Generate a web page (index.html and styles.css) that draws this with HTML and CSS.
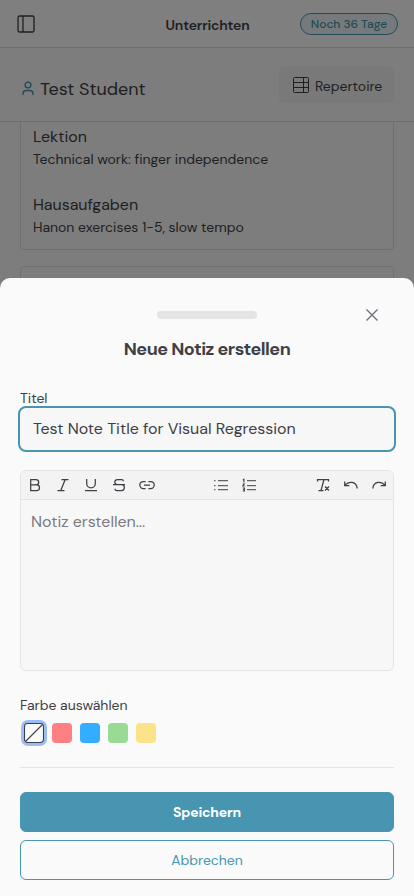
FILE: index.html
```html
<!DOCTYPE html>
<html lang="de">
<head>
<meta charset="utf-8">
<meta name="viewport" content="width=device-width, initial-scale=1">
<title>Unterrichten</title>
<link rel="stylesheet" href="styles.css">
</head>
<body>
<div class="app">
  <header class="topbar">
    <svg class="menu" width="18" height="18" viewBox="0 0 18 18"><rect x="1" y="1" width="16" height="16" rx="1.5"/><path d="M6 1v16"/></svg>
    <h1>Unterrichten</h1>
    <span class="badge">Noch 36 Tage</span>
  </header>
  <div class="student-bar">
    <svg class="user" width="12" height="15" viewBox="0 0 12 15"><circle cx="6" cy="4" r="2.9"/><path d="M1 14v-1.3C1 10.700 2.500 9.500 4.300 9.500h3.400C9.500 9.500 11 10.700 11 12.700V14"/></svg>
    <h2>Test Student</h2>
    <button class="repertoire">
      <svg width="16" height="16" viewBox="0 0 16 16"><rect x=".5" y=".5" width="15" height="15" rx="1"/><path d="M.5 5.500h15M.5 10.500h15M10.500.5v15"/></svg>
      <span>Repertoire</span>
    </button>
  </div>
  <main class="lessons">
    <article class="lesson lesson-cut">
      <section><h3>Lektion</h3><p>Technical work: finger independence</p></section>
      <section><h3>Hausaufgaben</h3><p>Hanon exercises 1-5, slow tempo</p></section>
    </article>
    <article class="lesson lesson-next"></article>
  </main>
</div>
<div class="backdrop">
  <div class="sheet">
    <div class="sheet-head">
      <span class="handle"></span>
      <svg class="close" width="14" height="14" viewBox="0 0 14 14"><path d="M1.500 1.500l11 11M12.500 1.500l-11 11"/></svg>
    </div>
    <h2 class="sheet-title">Neue Notiz erstellen</h2>
    <label class="label-title" for="t">Titel</label>
    <input id="t" class="field" value="Test Note Title for Visual Regression">
    <div class="editor">
      <div class="toolbar">
        <div class="group">
          <svg viewBox="0 0 16 16"><path d="M3.700 2.500h5.300a2.600 2.600 0 0 1 0 5.400H3.700zM3.700 7.900h6a2.700 2.700 0 0 1 0 5.600h-6z"/></svg>
          <svg viewBox="0 0 16 16"><path d="M6.500 2.500h7M2.500 13.500h7M10.200 2.500L5.800 13.500"/></svg>
          <svg viewBox="0 0 16 16"><path d="M3.700 2v4.500a4.300 4.300 0 0 0 8.600 0V2M2 13.500h12"/></svg>
          <svg viewBox="0 0 16 16"><path d="M12.400 4.200c0-1-.8-1.700-1.800-1.700H6.500c-3.600 0-3.600 5 0 5h4c3.800 0 3.800 6 0 6H6c-1.200 0-2-.6-2-1.800M2 7.500h12"/></svg>
          <svg viewBox="0 0 16 16"><path d="M6.600 4.500H4.300a3.500 3.500 0 0 0 0 7h2.300M9.400 4.500h2.300a3.500 3.500 0 0 1 0 7H9.400M5 8h6"/></svg>
        </div>
        <div class="group lists">
          <svg viewBox="0 0 16 16"><path d="M5 3.500h10M5 8.500h10M5 12.500h10M1 3.500h1.500M1 8.500h1.500M1 12.500h1.500"/></svg>
          <svg viewBox="0 0 16 16"><path d="M6 3.500h9M6 8.500h9M6 12.500h9"/><path class="thin" d="M1.900 3l1-.7v3.200M1.700 7h1.500L1.900 9h1.700M1.700 11h1.700v3H1.700M2.200 12.500h1.200"/></svg>
        </div>
        <div class="group">
          <svg viewBox="0 0 16 16"><path d="M2.500 4.500v-2h11v2M9 2.500L6 13.500M3.500 13.500h5M10 9.500l4 4M14 9.500l-4 4"/></svg>
          <svg viewBox="0 0 16 16"><path d="M1.700 4.500v4h4.600M2 8.200C6 3.500 13.500 4.500 14.200 11.500"/></svg>
          <svg viewBox="0 0 16 16"><path d="M14.300 4.500v4H9.700M14 8.200C10 3.500 2.500 4.500 1.800 11.500"/></svg>
        </div>
      </div>
      <div class="placeholder">Notiz erstellen...</div>
    </div>
    <div class="label-color">Farbe auswählen</div>
    <div class="swatches">
      <span class="swatch none"><svg width="20" height="20" viewBox="0 0 20 20"><rect x=".5" y=".5" width="19" height="19" rx="3"/><path d="M1.500 18.500l17-17"/></svg></span>
      <span class="swatch red"></span><span class="swatch blue"></span><span class="swatch green"></span><span class="swatch yellow"></span>
    </div>
    <div class="actions">
      <button class="btn primary">Speichern</button>
      <button class="btn secondary">Abbrechen</button>
    </div>
  </div>
</div>
</body>
</html>
```
FILE: styles.css
```css
* { box-sizing: border-box; margin: 0; padding: 0; }
body { width: 414px; height: 896px; overflow: hidden; background: #fafafa; color: #3f3f46; font: 400 14px/21px "DM Sans", Inter, sans-serif; letter-spacing: -.03px; }
svg { display: block; fill: none; stroke: currentColor; }
button { font: inherit; color: inherit; letter-spacing: inherit; border: 0; background: none; }

.app { height: 896px; overflow: hidden; }
.topbar { height: 48px; display: grid; grid-template-columns: 1fr auto 1fr; align-items: center; padding: 0 16px 0 17px; border-bottom: 1px solid #dcdcde; background: #fefefe; }
.menu { stroke-width: 1.300; }
.topbar h1 { font-size: 14px; font-weight: 600; letter-spacing: -.18px; padding-top: 3px; }
.badge { justify-self: end; width: 98px; height: 22px; border: 1px solid #4795b0; border-radius: 11px; background: #eef5f8; color: #4795b0; font-size: 12px; font-weight: 500; line-height: 20px; text-align: center; }
.student-bar { height: 74px; display: flex; align-items: center; padding: 0 20px 0 22px; border-bottom: 1px solid #dcdcde; }
.user { color: #4795b0; stroke-width: 1.400; margin-top: 7px; }
.student-bar h2 { margin: 9px auto 0 6px; font-size: 18px; font-weight: 400; }
.repertoire { display: flex; align-items: center; gap: 6px; width: 115px; height: 36px; margin-top: 1px; padding-left: 14px; border-radius: 4px; background: #f3f3f4; }
.repertoire span { padding-top: 2px; }
.lessons { padding: 0 20px; }
.lesson { border: 1px solid #e1e1e3; border-radius: 4px; padding: 3px 12px 11px; background: #fbfbfb; }
.lesson-cut { height: 128px; border-top: 0; border-radius: 0 0 4px 4px; display: flex; flex-direction: column; gap: 23px; }
.lesson-next { height: 200px; margin-top: 16px; }
.lesson h3 { font-size: 16px; line-height: 24px; font-weight: 400; }

.backdrop { position: absolute; inset: 0; width: 414px; height: 896px; display: flex; flex-direction: column; justify-content: flex-end; background: rgba(0, 0, 0, .5); }
.sheet { height: 618px; padding: 29px 20px 16px; border-radius: 10px 10px 0 0; background: #fafafa; display: flex; flex-direction: column; }
.sheet-head { height: 16px; display: grid; grid-template-columns: 1fr 100px 1fr; align-items: center; }
.handle { grid-column: 2; height: 8px; border-radius: 4px; background: #e4e4e5; }
.close { justify-self: end; margin-right: 15px; color: #71717a; stroke-width: 1.400; }
.sheet-title { margin-top: 14px; font-size: 18px; line-height: 24px; font-weight: 700; letter-spacing: -.53px; text-align: center; }
.label-title { margin-top: 27px; line-height: 21px; }
.field { width: 378px; height: 46px; margin: -3px 0 0 -2px; padding: 0 13px 1px; border: 2px solid #4795b0; border-radius: 8px; outline: 0; background: #f7f7f7; color: inherit; font: 400 16px "DM Sans", Inter, sans-serif; letter-spacing: -.03px; }
.editor { height: 201px; margin-top: 18px; border: 1px solid #e4e4e5; border-radius: 6px; background: #f7f7f7; overflow: hidden; }
.toolbar { height: 29px; display: flex; align-items: center; justify-content: space-between; padding: 0 6px; border-bottom: 1px solid #e4e4e5; background: #f3f3f3; }
.group { display: flex; gap: 12px; }
.group svg { width: 16px; height: 16px; stroke-width: 1.250; }
.lists { color: #62626a; }
.lists .thin { stroke-width: 1.100; stroke: #3f3f46; }
.placeholder { padding: 10px 10px; font-size: 16px; line-height: 24px; color: #7b7b7f; }
.label-color { margin-top: 24px; }
.swatches { display: flex; gap: 8px; margin-top: 7px; padding-left: 4px; }
.swatch { width: 20px; height: 20px; border-radius: 4px; }
.none { background: #fafafa; box-shadow: 0 0 0 3px #9bbcf5; }
.none svg { stroke-width: 1.100; }
.red { background: #ff8080; }
.blue { background: #33adff; }
.green { background: #99db95; }
.yellow { background: #fce389; }
.actions { display: flex; flex-direction: column; gap: 8px; margin-top: 24px; padding-top: 24px; border-top: 1px solid #e4e4e5; }
.btn { height: 40px; border: 1px solid #4795b0; border-radius: 6px; }
.primary { background: #4795b0; color: #fff; font-weight: 700; letter-spacing: -.22px; }
.secondary { color: #4795b0; }
```
